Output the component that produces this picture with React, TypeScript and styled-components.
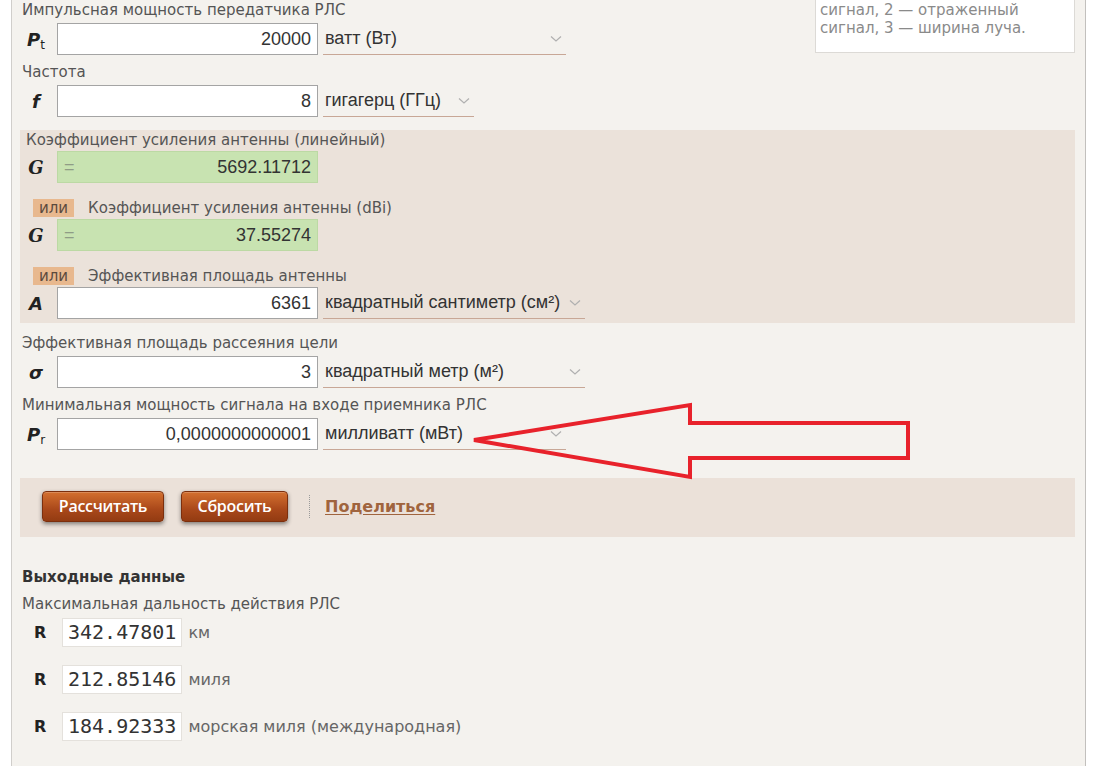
import React from 'react';
import styled, { createGlobalStyle } from 'styled-components';

const GlobalStyle = createGlobalStyle`
  html, body {
    margin: 0;
    padding: 0;
    background: #ffffff;
  }
  body {
    font-family: 'DejaVu Sans', Verdana, sans-serif;
  }
`;

const Screen = styled.div`
  position: relative;
  width: 1093px;
  height: 766px;
  overflow: hidden;
`;

const Page = styled.div`
  box-sizing: border-box;
  margin-left: 11px;
  width: 1075px;
  min-height: 766px;
  padding: 0 10px 0 8px;
  background: #f4f2ee;
  border-left: 1px solid #d0cecb;
  border-right: 1px solid #c2c0bd;
`;

const TopSection = styled.div`
  display: flex;
  align-items: flex-start;
  justify-content: space-between;
`;

const Fields = styled.div`
  display: flex;
  flex-direction: column;
  gap: 8px;
  padding-top: 1px;
`;

const Field = styled.div`
  display: flex;
  flex-direction: column;
`;

const FieldLabel = styled.div<{ $indent?: number; $gap?: number }>`
  padding-left: ${(p) => p.$indent ?? 2}px;
  margin-bottom: ${(p) => p.$gap ?? 4}px;
  font-size: 15px;
  line-height: 18px;
  color: #555;
  white-space: nowrap;
`;

const HelpBox = styled.div`
  box-sizing: border-box;
  width: 260px;
  padding: 1px 6px 15px 4px;
  background: #ffffff;
  border: 1px solid #dcdad6;
  border-top: none;
  font-size: 15px;
  line-height: 18px;
  color: #8a8a8a;
`;

const Row = styled.div`
  display: flex;
  align-items: center;
  gap: 5px;
  height: 32px;
`;

const Symbol = styled.span<{ $serif?: boolean }>`
  width: 32px;
  text-align: center;
  font-family: ${(p) => (p.$serif ? "'DejaVu Serif', 'Liberation Serif', serif" : "'DejaVu Sans', sans-serif")};
  font-style: italic;
  font-weight: bold;
  font-size: 18px;
  color: #222;

  sub {
    font-size: 12px;
    font-style: normal;
    font-weight: normal;
    vertical-align: -3px;
    line-height: 0;
  }
`;

const ValueInput = styled.input`
  box-sizing: border-box;
  width: 261px;
  height: 32px;
  margin: 0;
  padding: 0 6px;
  border: 1px solid #a4a4a4;
  background: #ffffff;
  text-align: right;
  font-family: 'Liberation Sans', Arial, sans-serif;
  font-size: 18px;
  color: #333;
  outline: none;
`;

const Computed = styled.div`
  box-sizing: border-box;
  display: flex;
  align-items: center;
  justify-content: space-between;
  width: 261px;
  height: 32px;
  padding: 0 6px;
  background: #c8e3b1;
  border: 1px solid #bcd9a4;
  font-family: 'Liberation Sans', Arial, sans-serif;
  font-size: 18px;
  color: #333;

  span {
    color: #8f9c86;
  }
`;

const UnitSelect = styled.div<{ $width: number }>`
  box-sizing: border-box;
  display: flex;
  align-items: center;
  justify-content: space-between;
  width: ${(p) => p.$width}px;
  height: 32px;
  padding: 0 4px 0 2px;
  border-bottom: 1px solid #c8a796;
  font-family: 'Liberation Sans', Arial, sans-serif;
  font-size: 18px;
  color: #333;
  white-space: nowrap;
`;

const Chevron = () => (
  <svg width="12" height="8" viewBox="0 0 12 8">
    <polyline points="1,1.5 6,6 11,1.5" fill="none" stroke="#b0b0b0" strokeWidth="1.2" />
  </svg>
);

const GainBlock = styled.div`
  margin-top: 13px;
  padding: 1px 0 4px;
  background: #ebe2da;
`;

const OrLine = styled.div`
  display: flex;
  align-items: center;
  height: 18px;
  margin: 16px 0 2px;
  font-size: 15px;
  color: #555;
`;

const OrBadge = styled.span`
  height: 18px;
  line-height: 18px;
  margin: 0 14px 0 13px;
  padding: 0 6px;
  background: #e8b88e;
  color: #5b4a3e;
`;

const LowerFields = styled.div`
  display: flex;
  flex-direction: column;
  gap: 8px;
  margin-top: 11px;
`;

const ActionBar = styled.div`
  display: flex;
  align-items: center;
  height: 59px;
  margin-top: 28px;
  padding: 0 0 3px 22px;
  box-sizing: border-box;
  background: #ebe1d9;
`;

const ActionButton = styled.button<{ $width: number }>`
  width: ${(p) => p.$width}px;
  height: 31px;
  margin-right: 17px;
  padding: 0;
  border: 1px solid #7c2f0d;
  border-radius: 4px;
  background: linear-gradient(#d4702f, #a9481a 60%, #933b12);
  box-shadow: 0 2px 4px rgba(0, 0, 0, 0.45), inset 0 1px 0 rgba(255, 255, 255, 0.2);
  font-family: 'Open Sans', sans-serif;
  font-weight: 600;
  font-size: 16px;
  color: #ffffff;
  letter-spacing: -0.3px;
  cursor: pointer;
`;

const Separator = styled.span`
  width: 0;
  height: 23px;
  margin: 0 15px 0 4px;
  border-left: 1px dotted #9a9a9a;
`;

const ShareLink = styled.a`
  font-size: 16px;
  font-weight: bold;
  color: #a0643e;
  text-decoration: underline;
  text-underline-offset: 2px;
  cursor: pointer;
`;

const Output = styled.div`
  padding: 31px 0 0 2px;
`;

const OutputTitle = styled.div`
  font-size: 15px;
  line-height: 18px;
  font-weight: bold;
  color: #333;
`;

const OutputLabel = styled.div`
  margin: 9px 0 5px;
  font-size: 15px;
  line-height: 18px;
  color: #555;
`;

const Results = styled.div`
  display: flex;
  flex-direction: column;
  gap: 19px;
`;

const ResultRow = styled.div`
  display: flex;
  align-items: center;
  height: 28px;
`;

const ResultSymbol = styled.span`
  width: 28px;
  padding-left: 12px;
  font-size: 16px;
  font-weight: bold;
  color: #222;
`;

const ResultValue = styled.span`
  box-sizing: border-box;
  display: flex;
  align-items: center;
  height: 29px;
  padding: 0 5px;
  background: #ffffff;
  border: 1px solid #e4e1dc;
  font-family: 'DejaVu Sans Mono', 'Liberation Mono', monospace;
  font-size: 20px;
  color: #333;
`;

const ResultUnit = styled.span`
  margin-left: 6px;
  font-size: 16px;
  color: #666;
`;

const Arrow = styled.svg`
  position: absolute;
  left: 0;
  top: 0;
  pointer-events: none;
`;

const results = [
  { value: '342.47801', unit: 'км' },
  { value: '212.85146', unit: 'миля' },
  { value: '184.92333', unit: 'морская миля (международная)' },
];

const App: React.FC = () => {
  return (
    <Screen>
      <GlobalStyle />
      <Page>
        <TopSection>
          <Fields>
            <Field>
              <FieldLabel>Импульсная мощность передатчика РЛС</FieldLabel>
              <Row>
                <Symbol>
                  P<sub>t</sub>
                </Symbol>
                <ValueInput defaultValue="20000" />
                <UnitSelect $width={243}>
                  ватт (Вт)
                  <Chevron />
                </UnitSelect>
              </Row>
            </Field>
            <Field>
              <FieldLabel>Частота</FieldLabel>
              <Row>
                <Symbol>f</Symbol>
                <ValueInput defaultValue="8" />
                <UnitSelect $width={151}>
                  гигагерц (ГГц)
                  <Chevron />
                </UnitSelect>
              </Row>
            </Field>
          </Fields>
          <HelpBox>
            сигнал, 2 — отраженный
            <br />
            сигнал, 3 — ширина луча.
          </HelpBox>
        </TopSection>

        {/* коэффициент усиления / площадь антенны */}
        <GainBlock>
          <FieldLabel $indent={6} $gap={2}>
            Коэффициент усиления антенны (линейный)
          </FieldLabel>
          <Row>
            <Symbol $serif>G</Symbol>
            <Computed>
              <span>=</span>5692.11712
            </Computed>
          </Row>
          <OrLine>
            <OrBadge>или</OrBadge>Коэффициент усиления антенны (dBi)
          </OrLine>
          <Row>
            <Symbol $serif>G</Symbol>
            <Computed>
              <span>=</span>37.55274
            </Computed>
          </Row>
          <OrLine>
            <OrBadge>или</OrBadge>Эффективная площадь антенны
          </OrLine>
          <Row>
            <Symbol>A</Symbol>
            <ValueInput defaultValue="6361" />
            <UnitSelect $width={262}>
              квадратный сантиметр (см²)
              <Chevron />
            </UnitSelect>
          </Row>
        </GainBlock>

        <LowerFields>
          <Field>
            <FieldLabel>Эффективная площадь рассеяния цели</FieldLabel>
            <Row>
              <Symbol>σ</Symbol>
              <ValueInput defaultValue="3" />
              <UnitSelect $width={262}>
                квадратный метр (м²)
                <Chevron />
              </UnitSelect>
            </Row>
          </Field>
          <Field>
            <FieldLabel>Минимальная мощность сигнала на входе приемника РЛС</FieldLabel>
            <Row>
              <Symbol>
                P<sub>r</sub>
              </Symbol>
              <ValueInput defaultValue="0,0000000000001" />
              <UnitSelect $width={243}>
                милливатт (мВт)
                <Chevron />
              </UnitSelect>
            </Row>
          </Field>
        </LowerFields>

        <ActionBar>
          <ActionButton $width={122}>Рассчитать</ActionButton>
          <ActionButton $width={107}>Сбросить</ActionButton>
          <Separator />
          <ShareLink>Поделиться</ShareLink>
        </ActionBar>

        <Output>
          <OutputTitle>Выходные данные</OutputTitle>
          <OutputLabel>Максимальная дальность действия РЛС</OutputLabel>
          <Results>
            {results.map((r) => (
              <ResultRow key={r.unit}>
                <ResultSymbol>R</ResultSymbol>
                <ResultValue>{r.value}</ResultValue>
                <ResultUnit>{r.unit}</ResultUnit>
              </ResultRow>
            ))}
          </Results>
        </Output>
      </Page>

      {/* красная стрелка поверх формы */}
      <Arrow width="1093" height="766" viewBox="0 0 1093 766">
        <polygon
          points="474,440 690,405 690,423 908,423 908,458 690,458 690,477"
          fill="none"
          stroke="#e8222b"
          strokeWidth="4"
          strokeLinejoin="miter"
        />
      </Arrow>
    </Screen>
  );
};

export default App;
